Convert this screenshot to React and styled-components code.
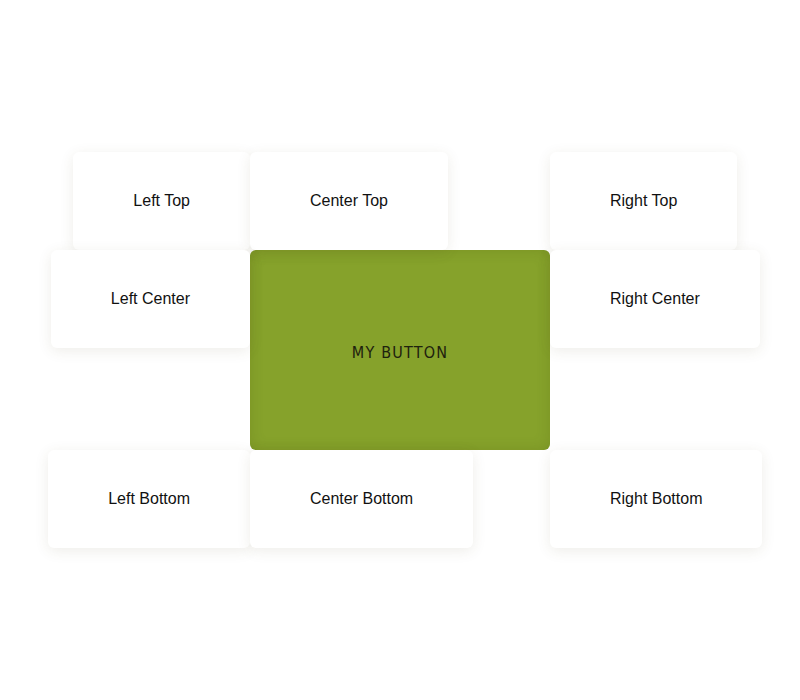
import React from "react";
import styled, { createGlobalStyle, css } from "styled-components";

const GlobalStyle = createGlobalStyle`
  html, body {
    margin: 0;
    padding: 0;
    background: #ffffff;
  }
  body {
    font-family: "Liberation Sans", Arial, sans-serif;
  }
`;

const Page = styled.div`
  min-height: 700px;
  display: flex;
  align-items: center;
  justify-content: center;
`;

const Anchor = styled.div`
  position: relative;
  width: 300px;
  height: 200px;
`;

const MainButton = styled.button`
  width: 100%;
  height: 100%;
  border: none;
  border-radius: 6px;
  background: #86a22b;
  box-shadow: inset 0 0 14px rgba(60, 80, 10, 0.18);
  color: #1e210e;
  font-family: "DejaVu Sans Condensed", "DejaVu Sans", sans-serif;
  font-size: 16px;
  letter-spacing: 1.2px;
  text-transform: uppercase;
  cursor: pointer;
  padding: 4px 0 0;
`;

// where each popover sits relative to the button
const placements = {
  leftTop: css`
    right: 100%;
    bottom: 100%;
  `,
  centerTop: css`
    left: 0;
    bottom: 100%;
  `,
  rightTop: css`
    left: 100%;
    bottom: 100%;
  `,
  leftCenter: css`
    right: 100%;
    top: 0;
  `,
  rightCenter: css`
    left: 100%;
    top: 0;
  `,
  leftBottom: css`
    right: 100%;
    top: 100%;
  `,
  centerBottom: css`
    left: 0;
    top: 100%;
  `,
  rightBottom: css`
    left: 100%;
    top: 100%;
  `,
};

const Popover = styled.div`
  position: absolute;
  ${({ $placement }) => placements[$placement]}
  box-sizing: border-box;
  height: 98px;
  padding: 0 60px;
  display: flex;
  align-items: center;
  justify-content: center;
  white-space: nowrap;
  background: #ffffff;
  border-radius: 6px;
  box-shadow: 0 3px 14px rgba(90, 80, 40, 0.1);
  font-size: 16px;
  color: #111111;
`;

const items = [
  ["leftTop", "Left Top"],
  ["centerTop", "Center Top"],
  ["rightTop", "Right Top"],
  ["leftCenter", "Left Center"],
  ["rightCenter", "Right Center"],
  ["leftBottom", "Left Bottom"],
  ["centerBottom", "Center Bottom"],
  ["rightBottom", "Right Bottom"],
];

const App = () => {
  return (
    <Page>
      <GlobalStyle />
      <Anchor>
        <MainButton>My Button</MainButton>
        {items.map(([placement, label]) => (
          <Popover key={placement} $placement={placement}>
            {label}
          </Popover>
        ))}
      </Anchor>
    </Page>
  );
};

export default App;
